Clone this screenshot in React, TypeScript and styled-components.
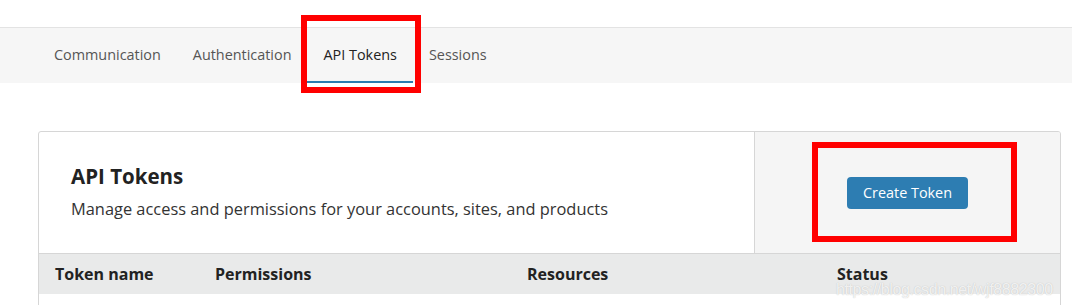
import React from 'react'
import styled, { createGlobalStyle } from 'styled-components'

const GlobalStyle = createGlobalStyle`
  html, body {
    margin: 0;
    padding: 0;
    background: #ffffff;
  }
  body {
    font-family: 'Open Sans', 'Noto Sans', Arial, sans-serif;
    color: #222;
  }
`

const Page = styled.div`
  position: relative;
  width: 1072px;
  height: 305px;
  overflow: hidden;
  padding-top: 27px;
  box-sizing: border-box;
`

const TabBar = styled.nav`
  display: flex;
  height: 56px;
  padding-left: 38px;
  background: #f6f6f6;
  border-top: 1px solid #e3e3e3;
  box-sizing: border-box;
`

const Tab = styled.div<{ $active?: boolean }>`
  display: flex;
  align-items: center;
  padding: 0 16px 1px;
  font-size: 14.4px;
  color: ${({ $active }) => ($active ? '#222' : '#555')};
  border-bottom: 2px solid ${({ $active }) => ($active ? '#2c7bb0' : 'transparent')};
`

const Content = styled.div`
  padding: 48px 11px 0 38px;
`

const Card = styled.section`
  border: 1px solid #d6d6d6;
  border-radius: 3px;
  height: 200px;
  overflow: hidden;
`

const CardHeader = styled.div`
  display: grid;
  grid-template-columns: 1fr 305px;
  height: 121px;
`

const Intro = styled.div`
  display: flex;
  flex-direction: column;
  justify-content: center;
  padding: 0 32px 4px;
  border-right: 1px solid #d6d6d6;
`

const Title = styled.h2`
  margin: 0 0 7px;
  font-size: 20.5px;
  font-weight: 700;
  color: #222;
`

const Subtitle = styled.p`
  margin: 0;
  font-size: 16.4px;
  color: #333;
`

const Actions = styled.div`
  display: flex;
  align-items: center;
  justify-content: center;
  background: #f5f5f5;
`

const Button = styled.button`
  width: 121px;
  height: 32px;
  border: none;
  border-radius: 4px;
  background: #2d7db2;
  color: #fff;
  font-family: inherit;
  font-size: 14.4px;
  cursor: pointer;
`

const Table = styled.table`
  width: 100%;
  border-collapse: collapse;
  table-layout: fixed;
`

const HeadRow = styled.tr`
  height: 40px;
  background: #e9eaea;
  border-top: 1px solid #d6d6d6;
`

const HeadCell = styled.th<{ $width: number }>`
  width: ${({ $width }) => $width}px;
  box-sizing: border-box;
  padding: 0 16px;
  text-align: left;
  font-size: 16px;
  font-weight: 700;
  color: #222;
  white-space: nowrap;
`

const Marker = styled.div<{ $x: number; $y: number; $w: number; $h: number }>`
  position: absolute;
  left: ${({ $x }) => $x}px;
  top: ${({ $y }) => $y}px;
  width: ${({ $w }) => $w}px;
  height: ${({ $h }) => $h}px;
  border: 6px solid #ff0000;
  box-sizing: border-box;
  pointer-events: none;
`

const Watermark = styled.div`
  position: absolute;
  left: 836px;
  top: 281px;
  font-family: 'Liberation Sans', Arial, sans-serif;
  font-size: 16px;
  letter-spacing: -0.4px;
  white-space: nowrap;
  color: rgba(255, 255, 255, 0.8);
  text-shadow: 0 0 1px rgba(170, 170, 170, 0.8);
  pointer-events: none;
`

const tabs = ['Communication', 'Authentication', 'API Tokens', 'Sessions']
const columns = [
  { label: 'Token name', width: 160 },
  { label: 'Permissions', width: 312 },
  { label: 'Resources', width: 310 },
  { label: 'Status', width: 240 },
]

export default function App() {
  return (
    <Page>
      <GlobalStyle />
      <TabBar>
        {tabs.map((t) => (
          <Tab key={t} $active={t === 'API Tokens'}>
            {t}
          </Tab>
        ))}
      </TabBar>
      <Content>
        <Card>
          <CardHeader>
            <Intro>
              <Title>API Tokens</Title>
              <Subtitle>Manage access and permissions for your accounts, sites, and products</Subtitle>
            </Intro>
            <Actions>
              <Button>Create Token</Button>
            </Actions>
          </CardHeader>
          <Table>
            <thead>
              <HeadRow>
                {columns.map((c) => (
                  <HeadCell key={c.label} $width={c.width}>
                    {c.label}
                  </HeadCell>
                ))}
              </HeadRow>
            </thead>
          </Table>
        </Card>
      </Content>
      <Marker $x={301} $y={15} $w={120} $h={78} />
      <Marker $x={812} $y={142} $w={205} $h={100} />
      <Watermark>https://blog.csdn.net/wjf8882300</Watermark>
    </Page>
  )
}
